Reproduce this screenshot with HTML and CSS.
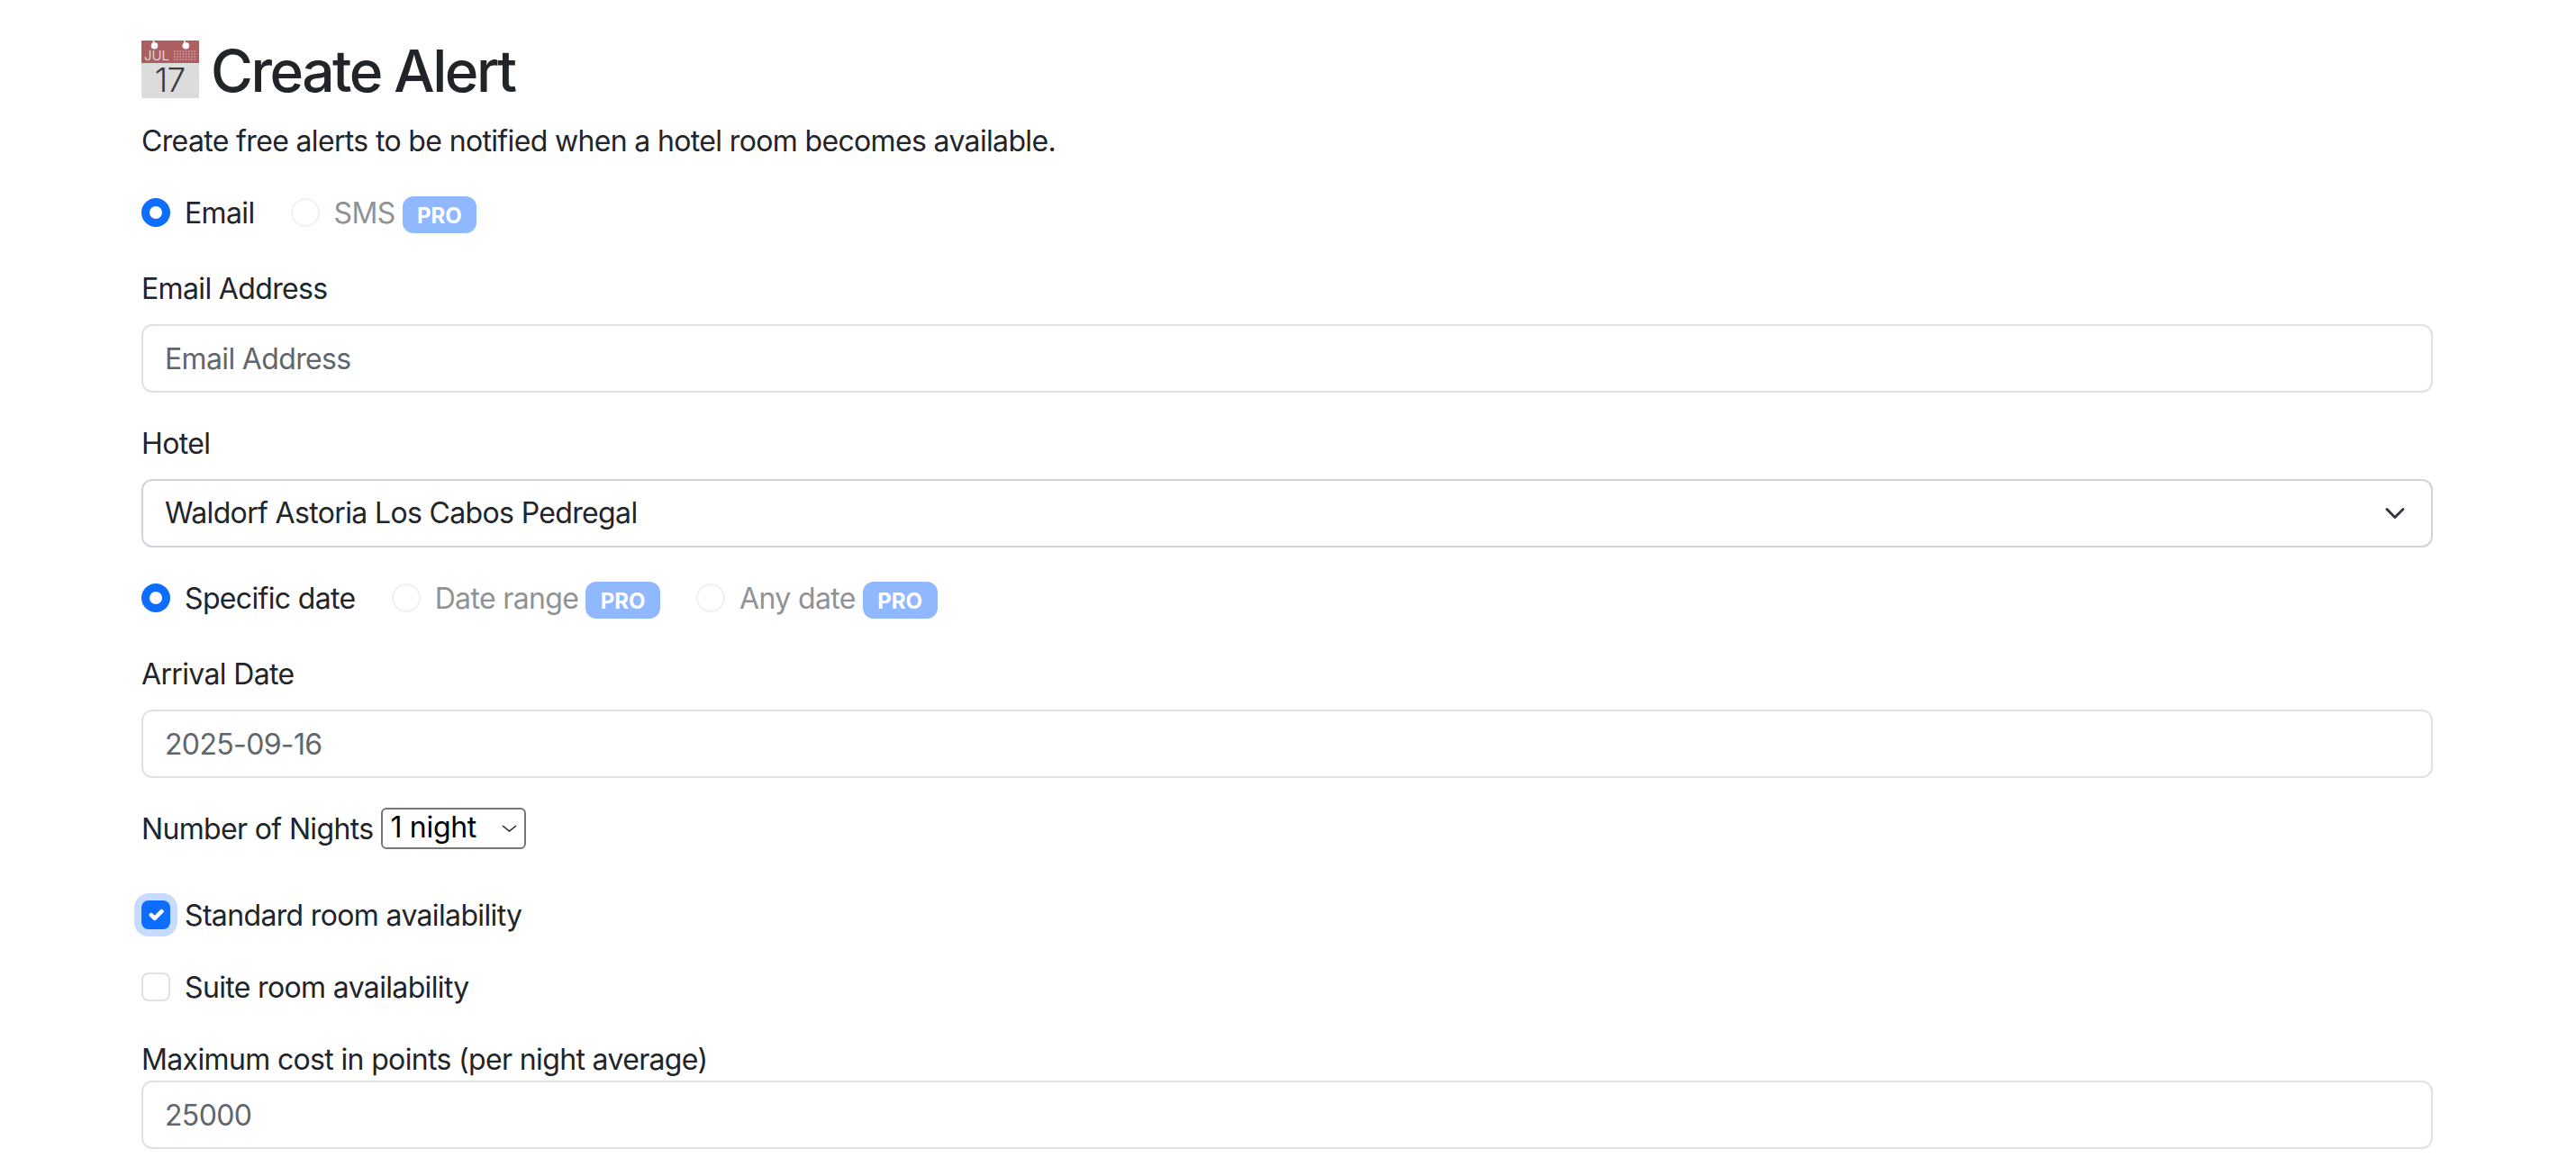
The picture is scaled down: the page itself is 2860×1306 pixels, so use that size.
FILE: index.html
```html
<!DOCTYPE html>
<html lang="en">
<head>
<meta charset="utf-8">
<title>Create Alert</title>
<link rel="stylesheet" href="styles.css">
</head>
<body>
<main class="container">
  <h2 class="title">
    <svg class="cal" viewBox="0 0 64 64" width="64" height="64" aria-hidden="true">
      <rect x="0" y="0" width="64" height="25" fill="#ad5f62"/>
      <rect x="0" y="25" width="64" height="39" fill="#dcdcdc"/>
      <circle cx="14.5" cy="5.7" r="3.8" fill="#fff"/>
      <circle cx="49.3" cy="5.7" r="3.8" fill="#fff"/>
      <path d="M13.5 0v4M48 0v4" stroke="#fff" stroke-width="1.5"/>
      <text x="3" y="22" class="cal-month">JUL</text>
      <path d="M36 12h25M36 15h25M36 18h25M36 21h25" stroke="#d2a0a2" stroke-width="1.4" stroke-dasharray="1.6 1.6"/>
      <text x="31.5" y="57" class="cal-day">17</text>
    </svg>
    <span>Create Alert</span>
  </h2>
  <p class="lead">Create free alerts to be notified when a hotel room becomes available.</p>

  <div class="choices">
    <label class="check"><input type="radio" name="channel" class="radio" checked><span>Email</span></label>
    <label class="check off"><input type="radio" name="channel" class="radio" disabled><span>SMS</span><b class="badge">PRO</b></label>
  </div>

  <div class="field">
    <label class="lbl" for="email">Email Address</label>
    <input id="email" class="ctl" type="text" placeholder="Email Address">
  </div>

  <div class="field">
    <label class="lbl" for="hotel">Hotel</label>
    <select id="hotel" class="ctl sel"><option>Waldorf Astoria Los Cabos Pedregal</option></select>
  </div>

  <div class="choices">
    <label class="check"><input type="radio" name="when" class="radio" checked><span>Specific date</span></label>
    <label class="check off"><input type="radio" name="when" class="radio" disabled><span>Date range</span><b class="badge">PRO</b></label>
    <label class="check off"><input type="radio" name="when" class="radio" disabled><span>Any date</span><b class="badge">PRO</b></label>
  </div>

  <div class="field">
    <label class="lbl" for="arrival">Arrival Date</label>
    <input id="arrival" class="ctl" type="text" value="2025-09-16">
  </div>

  <div class="nights">
    <label class="nights-lbl" for="nights">Number of Nights</label>
    <select id="nights" class="mini"><option>1 night</option></select>
  </div>

  <div class="rooms">
    <label class="check"><input type="checkbox" class="box focus" checked><span>Standard room availability</span></label>
    <label class="check"><input type="checkbox" class="box"><span>Suite room availability</span></label>
  </div>

  <div class="field">
    <label class="lbl flush" for="cost">Maximum cost in points (per night average)</label>
    <input id="cost" class="ctl" type="text" value="25000">
  </div>
</main>
</body>
</html>
```

FILE: styles.css
```css
* { box-sizing: border-box; }
html, body { margin: 0; height: 100%; overflow: hidden; }
body {
  background: #fff;
  color: #212529;
  font-family: Inter, "Liberation Sans", sans-serif;
  font-size: 32px;
  letter-spacing: -0.65px;
  line-height: 48px;
}
.container { padding: 40px 159px 0 157px; }
.title {
  display: flex;
  align-items: flex-start;
  gap: 13px;
  margin: 0 0 16px;
  height: 77px;
  font-size: 64px;
  font-weight: 500;
  letter-spacing: -2.5px;
  line-height: 77px;
}
.cal { display: block; flex: none; margin-top: 5px; overflow: visible; }
.cal-month { font: 300 15px Inter, sans-serif; letter-spacing: 0; fill: #eee; }
.cal-day { font: 300 37px Inter, sans-serif; letter-spacing: -1px; fill: #3c3c3c; text-anchor: middle; }
.lead { margin: 0 0 31px; }
.choices { display: flex; gap: 40px; height: 48px; margin-bottom: 36px; align-items: center; }
.check { display: flex; align-items: center; gap: 16px; height: 48px; }
.check span { padding-top: 2px; }
.off { color: #909294; }
.off span + .badge { margin-left: -8px; }
.radio, .box {
  appearance: none;
  flex: none;
  width: 32px;
  height: 32px;
  margin: 0;
  border: 2px solid #dee2e6;
  background: #fff;
}
.radio { border-radius: 50%; }
.radio:disabled { border-color: #eef0f2; }
.radio:checked { border: 9px solid #0d6efd; }
.box { border-radius: 8px; }
.box:checked {
  border: 0;
  background: #0d6efd url("data:image/svg+xml,%3Csvg xmlns='http://www.w3.org/2000/svg' viewBox='0 0 20 20'%3E%3Cpath fill='none' stroke='%23fff' stroke-linecap='round' stroke-linejoin='round' stroke-width='3.4' d='m6 10 3 3 6-6'/%3E%3C/svg%3E") center / 26px no-repeat;
}
.focus { box-shadow: 0 0 0 8px #c6dbff; }
.badge {
  display: inline-block;
  margin-top: 5px;
  padding: 0 16.5px;
  height: 41px;
  border-radius: 12px;
  background: #8fb8ff;
  color: #fff;
  font-size: 24px;
  font-weight: 700;
  letter-spacing: 0;
  line-height: 43px;
}
.field { margin-bottom: 32px; }
.lbl { display: block; height: 48px; margin-bottom: 16px; padding-top: 1px; }
.lbl.flush { margin-bottom: 0; }
.ctl {
  display: block;
  width: 100%;
  height: 76px;
  padding: 12px 24px;
  border: 2px solid #dee2e6;
  border-radius: 12px;
  background: #fff;
  color: #5f666d;
  font: inherit;
  letter-spacing: inherit;
  line-height: 48px;
}
.ctl::placeholder { color: #5f666d; opacity: 1; }
.sel {
  appearance: none;
  border-color: #ced4da;
  color: #212529;
  background: #fff url("data:image/svg+xml,%3Csvg xmlns='http://www.w3.org/2000/svg' viewBox='0 0 16 16'%3E%3Cpath fill='none' stroke='%23343a40' stroke-linecap='round' stroke-linejoin='round' stroke-width='2' d='m2 5 6 6 6-6'/%3E%3C/svg%3E") right 24px center / 32px 24px no-repeat;
}
.nights { display: flex; align-items: center; gap: 9px; height: 48px; margin-bottom: 48px; }
.nights-lbl { padding-top: 2px; }
.mini {
  appearance: none;
  width: 161px;
  height: 46px;
  padding: 0 8px 2px;
  border: 2px solid #767676;
  border-radius: 6px;
  color: #000;
  font-family: inherit;
  font-size: 32px;
  letter-spacing: -0.3px;
  line-height: 40px;
  background: #fff url("data:image/svg+xml,%3Csvg xmlns='http://www.w3.org/2000/svg' viewBox='0 0 17 8'%3E%3Cpath fill='none' stroke='%23222' stroke-width='1.5' d='m1 1 7.5 6L16 1'/%3E%3C/svg%3E") right 8px center / 17px 8px no-repeat;
}
.rooms { display: flex; flex-direction: column; gap: 32px; margin-bottom: 32px; }
```
